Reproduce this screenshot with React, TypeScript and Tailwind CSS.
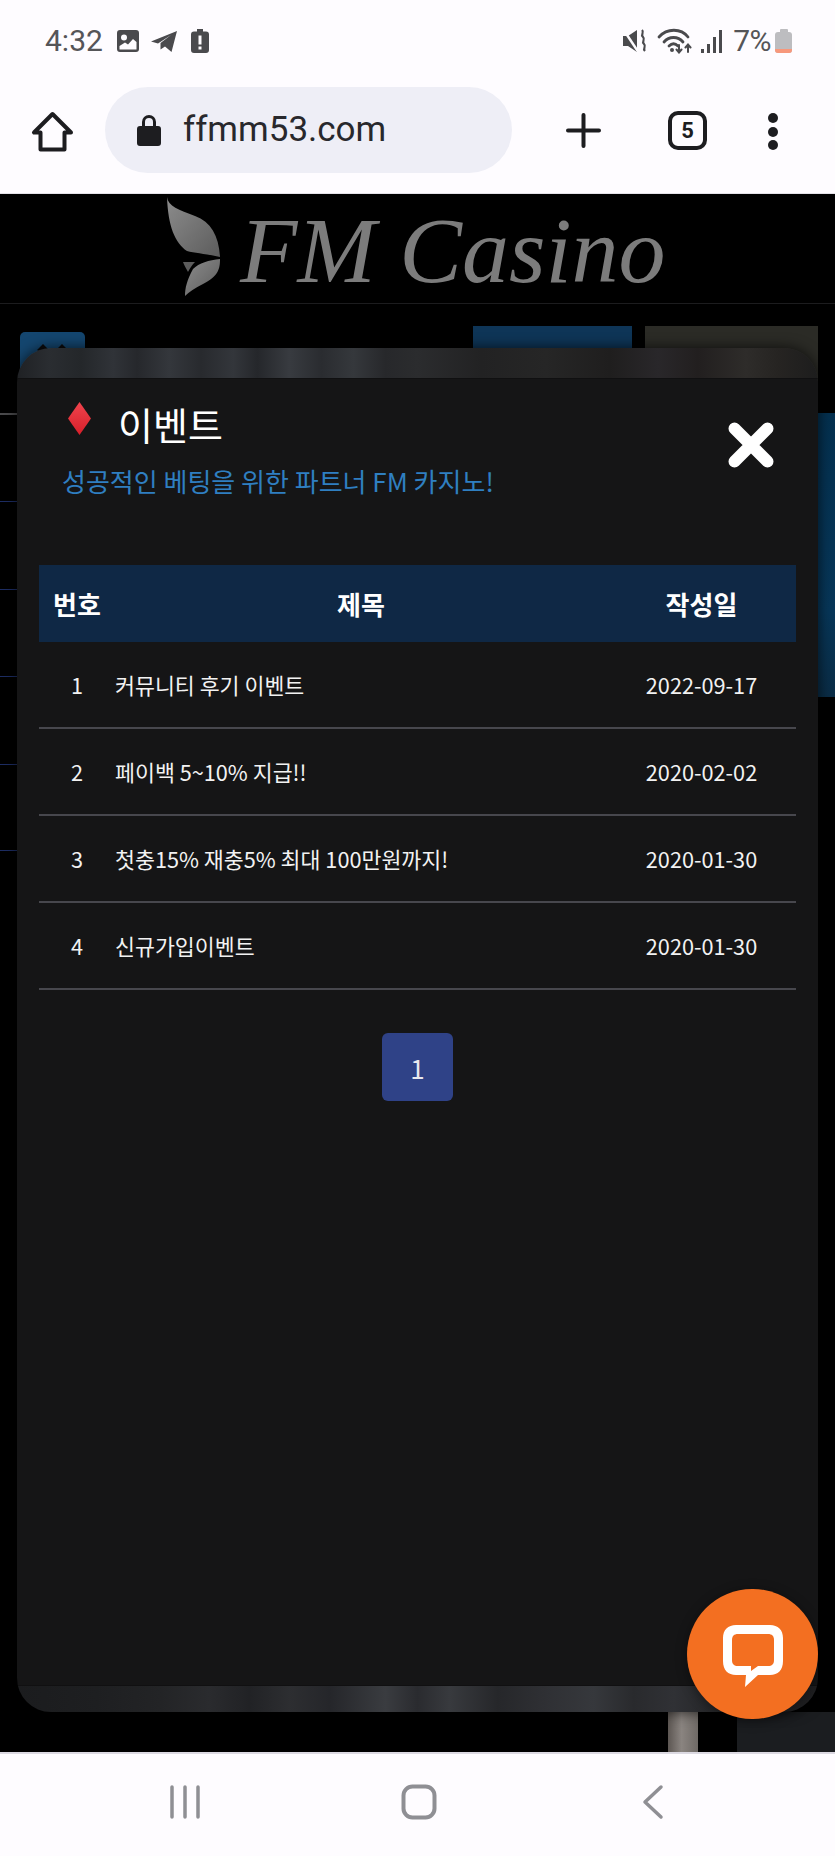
import React from 'react';

const rows = [
  { no: 1, title: '커뮤니티 후기 이벤트', date: '2022-09-17' },
  { no: 2, title: '페이백 5~10% 지급!!', date: '2020-02-02' },
  { no: 3, title: '첫충15% 재충5% 최대 100만원까지!', date: '2020-01-30' },
  { no: 4, title: '신규가입이벤트', date: '2020-01-30' },
];

function StatusBar() {
  return (
    <div className="h-[64px] flex items-end justify-between pl-[45px] pr-[43px] pb-[8px] font-['Roboto',sans-serif] text-[30px] leading-[30px] text-[#555558]">
      <div className="flex items-center">
        <span className="w-[58px]">4:32</span>
        <svg className="ml-[13px]" width="24" height="24" viewBox="0 0 24 24">
          <path fill="#4a4a4d" fillRule="evenodd" d="M4 1h16a3 3 0 0 1 3 3v16a3 3 0 0 1-3 3H4a3 3 0 0 1-3-3V4a3 3 0 0 1 3-3Zm4 4.500a3 3 0 1 0 0 6 3 3 0 0 0 0-6ZM3.500 20.500h17V13l-3.500-3-5 5.500-3-2-5.500 3.500Z" />
        </svg>
        <svg className="ml-[10px]" width="28" height="24" viewBox="0 0 28 24">
          <path fill="#4a4a4d" d="M1 12.500 27 2l-5.500 21-6.500-5.500-4.500 3V14L21 6 8 14.500Z" />
        </svg>
        <svg className="ml-[13px]" width="18" height="24" viewBox="0 0 18 24">
          <path fill="#4a4a4d" fillRule="evenodd" d="M6 0h6v2.500h3a3 3 0 0 1 3 3V21a3 3 0 0 1-3 3H3a3 3 0 0 1-3-3V5.500a3 3 0 0 1 3-3h3ZM7.500 6.500v9h3v-9Zm0 11v3h3v-3Z" />
        </svg>
      </div>
      <div className="flex items-center">
        <svg width="24" height="24" viewBox="0 0 24 24">
          <path fill="#4a4a4d" d="M0 7h5l9-6v22l-9-6H0Z" />
          <path stroke="#fefcff" strokeWidth="2.500" d="M0 0l16 24" />
          <path fill="none" stroke="#4a4a4d" strokeWidth="2.200" d="M19 1c3 3-2 4 1 7s-2 4 1 7-2 4 1 7" />
        </svg>
        <svg className="ml-[10px]" width="38" height="26" viewBox="0 0 38 26">
          <g fill="none" stroke="#4a4a4d" strokeWidth="2.800" strokeLinecap="round">
            <path d="M2 9c8-9 22-9 29 0" />
            <path d="M7 14c5-6 14-6 19 0" />
            <path d="M12 18c3-3 6-3 9 0" />
            <path d="M22 17v7M19.500 21.500l2.500 3 2.500-3M31 24v-7M28.500 19.500l2.500-3 2.500 3" strokeWidth="2" />
          </g>
          <circle cx="15" cy="22" r="2" fill="#4a4a4d" />
        </svg>
        <svg className="ml-[5px]" width="22" height="24" viewBox="0 0 22 24">
          <path fill="#4a4a4d" d="M1 20h3v4H1ZM7 15h3v9H7ZM13 8h3v16h-3ZM19 1h3v23h-3Z" />
        </svg>
        <span className="ml-[11px] tracking-[-0.5px]">7%</span>
        <div className="ml-[4px] w-[17px] h-[24px]">
          <div className="mx-auto w-[8px] h-[3px] rounded-t-[1px] bg-[#bdbdc0]" />
          <div className="h-[21px] rounded-[3px] bg-[#bdbdc0] overflow-hidden flex flex-col justify-end">
            <div className="h-[4px] bg-[#f7987c]" />
          </div>
        </div>
      </div>
    </div>
  );
}

function BrowserBar() {
  return (
    <div className="h-[130px] border-b border-[#e4e2e8] flex items-start">
      <svg className="ml-[31px] mt-[47px]" width="44" height="42" viewBox="0 0 44 42">
        <path fill="none" stroke="#1d1d20" strokeWidth="4" strokeLinejoin="round" d="M21.500 3 3 21.500h6.500V38.500h24V21.500H40Z" />
      </svg>
      <div className="ml-[30px] mt-[23px] w-[407px] h-[86px] rounded-[43px] bg-[#eeeef6] flex items-center">
        <svg className="ml-[32px]" width="24" height="32" viewBox="0 0 24 32">
          <path fill="#1d1d20" fillRule="evenodd" d="M5 12V8a7 7 0 0 1 14 0v4h2a3 3 0 0 1 3 3v14a3 3 0 0 1-3 3H3a3 3 0 0 1-3-3V15a3 3 0 0 1 3-3Zm3 0h8V8a4 4 0 0 0-8 0Z" />
        </svg>
        <span className="ml-[22px] font-['Roboto',sans-serif] text-[35px] leading-[40px] text-[#28282c]">ffmm53.com</span>
      </div>
      <svg className="ml-[54px] mt-[49px]" width="35" height="35" viewBox="0 0 35 35">
        <path stroke="#1d1d20" strokeWidth="4" strokeLinecap="round" d="M17.500 2v31M2 17.500h31" />
      </svg>
      <div className="ml-[67px] mt-[47px] w-[39px] h-[39px] rounded-[10px] border-[4px] border-[#1d1d20] flex items-center justify-center font-['Roboto',sans-serif] font-bold text-[22px] leading-none text-[#1d1d20]">
        5
      </div>
      <div className="ml-[61px] mt-[49px] flex flex-col gap-[3.500px]">
        <span className="w-[10px] h-[10px] rounded-full bg-[#1d1d20]" />
        <span className="w-[10px] h-[10px] rounded-full bg-[#1d1d20]" />
        <span className="w-[10px] h-[10px] rounded-full bg-[#1d1d20]" />
      </div>
    </div>
  );
}

// the dimmed site that sits behind the popup
function SiteBehind() {
  return (
    <div className="h-full flex flex-col bg-black">
      <div className="h-[110px] border-b border-[#1c1c1e] flex items-start pl-[165px]">
        <svg className="mt-[2px]" width="60" height="102" viewBox="0 0 60 102">
          <defs>
            <linearGradient id="wing" x1="0" y1="0" x2="1" y2="1">
              <stop offset="0" stopColor="#8c8c8c" />
              <stop offset="1" stopColor="#5c5c5c" />
            </linearGradient>
          </defs>
          <path fill="url(#wing)" d="M2 1C3 10 14 14 30 20 46 26 54 40 55 61 42 58 30 57 22 55 10 47 3 30 2 1Z" />
          <path fill="url(#wing)" d="M55 63C55 72 54 80 38 88 30 92 24 96 20 100 20 92 22 84 28 73 34 67 44 64 55 63Z" />
          <path fill="#5c5c5c" d="M18 66 30 66C27 69 25 72 23 76 21 72 19 69 18 66Z" />
        </svg>
        <span className="ml-[15px] mt-[6px] font-['Liberation_Serif',serif] italic text-[94px] leading-[100px] text-[#7c7c7c]">
          FM Casino
        </span>
      </div>
      <div className="h-[109px] pl-[20px] pr-[17px] flex items-start">
        <div className="mt-[28px] w-[65px] h-[60px] rounded-t-[5px] bg-[#14466f] pl-[17px] pt-[12px]">
          <svg width="32" height="8" viewBox="0 0 32 8">
            <path fill="#0b0b0d" d="M6 0l6 6-3 2H3L0 6ZM25 0l6 6-3 2h-6l-3-2Z" />
          </svg>
        </div>
        <div className="ml-auto mt-[22px] w-[159px] h-[60px] bg-[#0e3557]" />
        <div className="ml-[13px] mt-[22px] w-[173px] h-[60px] bg-[#2b2b26]" />
      </div>
      <div className="flex-1 flex justify-between">
        <div className="w-[17px] flex flex-col">
          <div className="h-[88px] border-t-[2px] border-[#4a4a4c]" />
          <div className="h-[88px] border-t border-[#1d2d63]" />
          <div className="h-[87px] border-t border-[#1d2d63]" />
          <div className="h-[88px] border-t border-[#1d2d63]" />
          <div className="h-[86px] border-t border-[#1d2d63]" />
          <div className="h-[86px] border-t border-[#1d2d63]" />
        </div>
        <div className="w-[17px] h-[284px] bg-[linear-gradient(180deg,#04304f_0%,#073658_70%,#0a2c45_100%)]" />
      </div>
      <div className="h-[40px] flex pl-[668px]">
        <div className="w-[30px] bg-[linear-gradient(90deg,#5c5652,#8a8480_45%,#6f6a66)]" />
        <div className="ml-[39px] flex-1 bg-[#1b1d20]" />
      </div>
    </div>
  );
}

function EventPopup() {
  return (
    <div className="absolute left-[17px] top-[154px] w-[801px] h-[1364px] rounded-[34px] overflow-hidden shadow-[0_0_14px_rgba(0,0,0,0.7)] flex flex-col">
      {/* stone texture strips above and below the body */}
      <div className="h-[30px] shrink-0 bg-[linear-gradient(90deg,#1f2124_0%,#2a2d31_4%,#24272a_8%,#303338_12%,#26282c_15%,#34373c_19%,#282a2e_23%,#33363b_27%,#25272b_30%,#383b40_34%,#2a2c30_38%,#35383c_42%,#27282b_46%,#2b2c2e_50%,#222223_58%,#262626_66%,#1f1e1e_74%,#29272a_80%,#221f1f_85%,#2e2c2a_91%,#262422_95%,#1d1d1d_100%)]" />
      <div className="flex-1 bg-[#151516] border-t border-[#101011] font-['Noto_Sans_CJK_KR',sans-serif] text-white">
        <div className="relative h-[186px]">
          <div className="pt-[23px] pl-[51px] flex items-start">
            <svg width="23" height="33" viewBox="0 0 23 33">
              <defs>
                <linearGradient id="gem" x1="0" y1="0" x2="0" y2="1">
                  <stop offset="0" stopColor="#f0444d" />
                  <stop offset="1" stopColor="#d81f2a" />
                </linearGradient>
              </defs>
              <path fill="url(#gem)" d="M11.500 0 23 16.500 11.500 33 0 16.500Z" />
            </svg>
            <h2 className="ml-[27px] -mt-[1px] text-[38px] leading-[46px] font-normal">이벤트</h2>
          </div>
          <p className="mt-[15px] pl-[45px] text-[26px] leading-[38px] text-[#2f7fc1]">
            성공적인 베팅을 위한 파트너 FM 카지노!
          </p>
          {/* close button */}
          <svg className="absolute left-[711px] top-[43px]" width="46" height="46" viewBox="0 0 46 46">
            <path stroke="#fff" strokeWidth="12" strokeLinecap="round" d="M6.500 6.500l33 33M39.500 6.500l-33 33" />
          </svg>
        </div>

        <div className="mx-[22px]">
          <div className="h-[77px] grid grid-cols-[76px_1fr_189px] items-center bg-[#0f2845] text-[26px] font-bold text-center">
            <span>번호</span>
            <span>제목</span>
            <span>작성일</span>
          </div>
          {rows.map((r) => (
            <div key={r.no} className="h-[87px] grid grid-cols-[76px_1fr_189px] items-center border-b-[2px] border-[#47474d] text-[21.700px] leading-[30px] text-[#f2f2f2]">
              <span className="text-center">{r.no}</span>
              <span>{r.title}</span>
              <span className="text-center">{r.date}</span>
            </div>
          ))}
        </div>

        <div className="mt-[43px] flex justify-center">
          <div className="w-[71px] h-[68px] rounded-[6px] bg-[#2f4287] flex items-center justify-center text-[26px] text-[#e8e8ee]">1</div>
        </div>
      </div>
      <div className="h-[27px] shrink-0 border-t border-[#101011] bg-[linear-gradient(90deg,#1b1c1e_0%,#1e1f21_10%,#232426_18%,#2a2b2e_24%,#212225_29%,#2d2e31_34%,#25262a_39%,#3a3c40_46%,#2a2b2f_50%,#383a3e_54%,#26272a_60%,#2f3034_66%,#36383c_72%,#292a2d_77%,#303135_82%,#232426_88%,#1e1e20_100%)]" />
    </div>
  );
}

function NavBar() {
  return (
    <div className="h-[104px] border-t-[2px] border-[#dcd9e2] bg-[#fefcff] relative">
      <svg className="absolute left-[168px] top-[31px]" width="34" height="34" viewBox="0 0 34 34">
        <path stroke="#8f8f94" strokeWidth="3.500" strokeLinecap="round" d="M4 2v30M17 2v30M30 2v30" />
      </svg>
      <svg className="absolute left-[401px] top-[30px]" width="36" height="36" viewBox="0 0 36 36">
        <rect x="2.500" y="2.500" width="31" height="31" rx="9" fill="none" stroke="#8f8f94" strokeWidth="4" />
      </svg>
      <svg className="absolute left-[641px] top-[30px]" width="24" height="36" viewBox="0 0 24 36">
        <path fill="none" stroke="#8f8f94" strokeWidth="3.500" strokeLinecap="round" strokeLinejoin="round" d="M20 3 4 18l16 15" />
      </svg>
    </div>
  );
}

export default function App() {
  return (
    <div className="w-[835px] h-[1856px] flex flex-col overflow-hidden bg-[#fefcff]">
      <StatusBar />
      <BrowserBar />
      <div className="relative flex-1">
        <SiteBehind />
        <EventPopup />
        {/* live chat bubble */}
        <div className="absolute left-[687px] top-[1395px] w-[131px] h-[130px] rounded-full bg-[#f36f21] shadow-[0_2px_12px_rgba(0,0,0,0.4)] flex items-center justify-center pt-[4px]">
          <svg width="62" height="64" viewBox="0 0 62 64">
            <path fill="#fff" fillRule="evenodd" d="M14 1h34c8 0 13 5 13 13v23c0 9-5 14-13 14H36L23 63l1-12H14C6 51 1 46 1 37V14C1 6 6 1 14 1Zm2 9c-4 0-6 2-6 6v20c0 4 2 6 6 6h13v5l7-5h10c4 0 6-2 6-6V16c0-4-2-6-6-6Z" />
          </svg>
        </div>
      </div>
      <NavBar />
    </div>
  );
}
